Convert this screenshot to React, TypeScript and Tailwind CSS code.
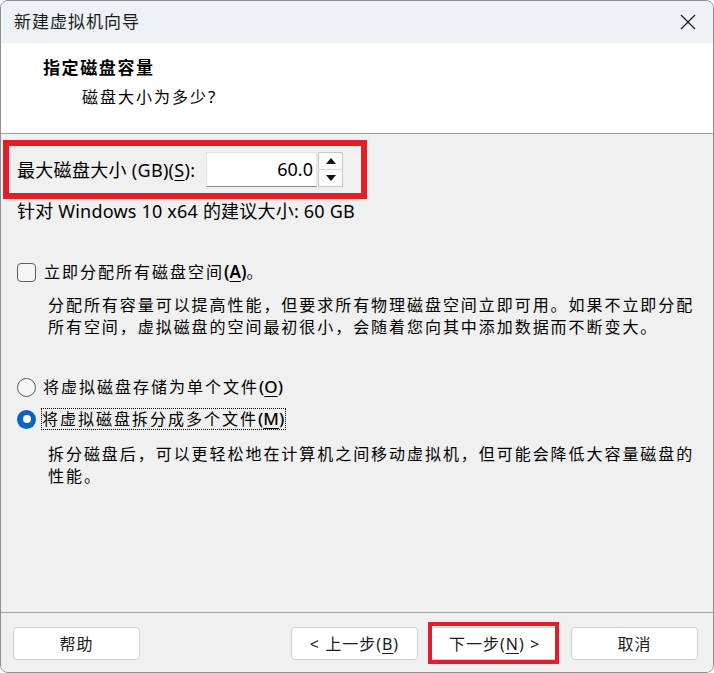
import React from "react";

function Radio({ checked }: { checked: boolean }) {
  return checked ? (
    <span className="w-[19px] h-[19px] rounded-full bg-[#0067c0] flex items-center justify-center shrink-0">
      <span className="w-[8px] h-[8px] rounded-full bg-white" />
    </span>
  ) : (
    <span className="w-[19px] h-[19px] rounded-full border border-[#5c5c5c] bg-[#f5f5f5] shrink-0" />
  );
}

function Btn({ children }: { children: React.ReactNode }) {
  return (
    <button className="w-[127px] h-[33px] bg-white border border-[#d0d0d0] rounded-[4px] text-[16px] tracking-[1px] text-[#1b1b1b] flex items-center justify-center">
      {children}
    </button>
  );
}

export default function App() {
  return (
    <div className="w-[714px] h-[673px] relative font-['Noto_Sans','Noto_Sans_CJK_SC',sans-serif] text-black">
      <div className="w-full h-full border border-[#8f8f8f] rounded-[8px] overflow-hidden flex flex-col bg-[#f0f0f0]">
        {/* Title bar */}
        <div className="h-[42px] bg-[#eef2f7] flex items-center justify-between pl-[13px] pr-[17px] shrink-0">
          <span className="text-[17px] tracking-[1px] text-[#1a1a1a]">新建虚拟机向导</span>
          <svg width="16" height="16" viewBox="0 0 16 16" fill="none" stroke="#1a1a1a" strokeWidth="1.3">
            <path d="M1 1 L15 15 M15 1 L1 15" />
          </svg>
        </div>
        {/* Header */}
        <div className="h-[91px] bg-white border-b border-[#a0a0a0] shrink-0 flex flex-col pt-[13px]">
          <div className="ml-[42px] h-[24px] leading-[24px] text-[17px] font-bold tracking-[1.6px]">指定磁盘容量</div>
          <div className="ml-[81px] mt-[5px] h-[24px] leading-[24px] text-[16px] tracking-[2px]">
            磁盘大小为多少<span className="text-[17px] tracking-[0px]">?</span>
          </div>
        </div>
        {/* Body */}
        <div className="flex-1 bg-[#f0f0f0] pl-[16px] pt-[18px] flex flex-col">
          <div className="flex items-center h-[35px]">
            <span className="w-[189px] text-[18px] leading-[24px] tracking-[0.3px]">
              最大磁盘大小 (GB)(<span className="underline underline-offset-[3px]">S</span>):
            </span>
            <div className="w-[111px] h-[35px] bg-white border border-[#e3e3e3] border-b-[#8a8a8a] flex items-center justify-end pr-[3px] text-[18px]">
              60.0
            </div>
            <div className="ml-[1px] w-[25px] h-[35px] flex flex-col border border-[#c8c8c8] bg-[#fbfbfb]">
              <div className="flex-1 flex items-center justify-center border-b border-[#d8d8d8]">
                <svg width="10" height="6" viewBox="0 0 10 6"><path d="M0 6 L5 0 L10 6 Z" fill="#111" /></svg>
              </div>
              <div className="flex-1 flex items-center justify-center">
                <svg width="10" height="6" viewBox="0 0 10 6"><path d="M0 0 L5 6 L10 0 Z" fill="#111" /></svg>
              </div>
            </div>
          </div>
          <div className="mt-[12px] h-[24px] leading-[24px] text-[18px] tracking-[0.2px]">针对 Windows 10 x64 的建议大小: 60 GB</div>

          <div className="mt-[37px] h-[24px] flex items-center">
            <span className="w-[19px] h-[19px] rounded-[4px] border border-[#5c5c5c] bg-[#f6f6f6] shrink-0" />
            <span className="ml-[8px] text-[16px] tracking-[2px] leading-[24px]">
              立即分配所有磁盘空间<span className="tracking-[0px] text-[17px] font-semibold">(<span className="underline underline-offset-[3px]">A</span>)</span>。
            </span>
          </div>
          <div className="mt-[10px] ml-[31px] text-[16px] tracking-[1.95px] leading-[22px] w-[666px]">
            分配所有容量可以提高性能，但要求所有物理磁盘空间立即可用。如果不立即分配<br />
            所有空间，虚拟磁盘的空间最初很小，会随着您向其中添加数据而不断变大。
          </div>

          <div className="mt-[37px] h-[24px] flex items-center">
            <Radio checked={false} />
            <span className="ml-[7px] text-[16px] tracking-[2px] leading-[22px]">
              将虚拟磁盘存储为单个文件<span className="tracking-[0px] text-[17px] font-medium">(<span className="underline underline-offset-[3px]">O</span>)</span>
            </span>
          </div>
          <div className="mt-[8px] h-[24px] flex items-center">
            <Radio checked={true} />
            <span className="ml-[5px] border border-dotted border-black text-[16px] tracking-[2px] leading-[20px] pr-[1px]">
              将虚拟磁盘拆分成多个文件<span className="tracking-[0px] text-[17px] font-medium">(<span className="underline underline-offset-[3px]">M</span>)</span>
            </span>
          </div>
          <div className="mt-[12px] ml-[31px] text-[16px] tracking-[1.95px] leading-[22px] w-[666px]">
            拆分磁盘后，可以更轻松地在计算机之间移动虚拟机，但可能会降低大容量磁盘的<br />
            性能。
          </div>
        </div>
        {/* Footer */}
        <div className="h-[60px] shrink-0 border-t border-[#a0a0a0] bg-[#f0f0f0] flex items-start pt-[14px] pl-[12px] pr-[15px]">
          <Btn>帮助</Btn>
          <div className="flex-1" />
          <div className="flex gap-[13px]">
            <Btn>
              &lt; 上一步(<span className="underline underline-offset-[3px]">B</span>)
            </Btn>
            <Btn>
              下一步(<span className="underline underline-offset-[3px]">N</span>) &gt;
            </Btn>
            <Btn>取消</Btn>
          </div>
        </div>
      </div>
      {/* Red annotation boxes */}
      <div className="absolute left-[3px] top-[140px] w-[364px] h-[59px] border-[6px] border-[#e41e25] pointer-events-none" />
      <div className="absolute left-[428px] top-[622px] w-[131px] h-[42px] border-[4px] border-[#e41e25] pointer-events-none" />
    </div>
  );
}
